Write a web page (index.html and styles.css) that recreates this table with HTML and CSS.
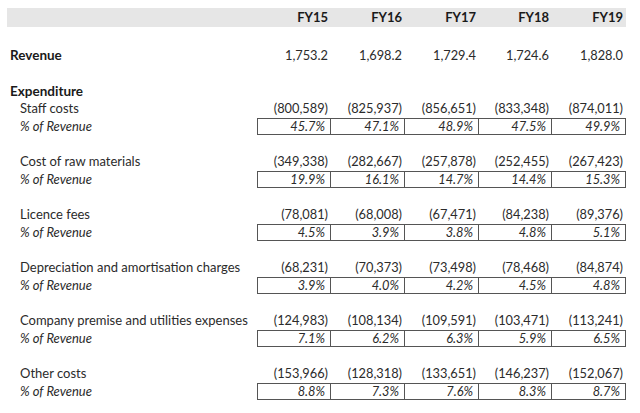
FILE: index.html
```html
<!DOCTYPE html>
<html>
<head>
<meta charset="utf-8">
<link rel="stylesheet" href="styles.css">
</head>
<body>
<div class="sheet">
  <div class="row head">
    <div class="label"></div>
    <div class="num">FY15</div><div class="num">FY16</div><div class="num">FY17</div><div class="num">FY18</div><div class="num">FY19</div>
  </div>
  <div class="row gap first"></div>
  <div class="row">
    <div class="label strong">Revenue</div>
    <div class="num">1,753.2</div><div class="num">1,698.2</div><div class="num">1,729.4</div><div class="num">1,724.6</div><div class="num">1,828.0</div>
  </div>
  <div class="row gap"></div>
  <div class="row">
    <div class="label strong">Expenditure</div>
  </div>

  <div class="row">
    <div class="label sub">Staff costs</div>
    <div class="num">(800,589)</div><div class="num">(825,937)</div><div class="num">(856,651)</div><div class="num">(833,348)</div><div class="num">(874,011)</div>
  </div>
  <div class="row pct">
    <div class="label sub">% of Revenue</div>
    <div class="num">45.7%</div><div class="num">47.1%</div><div class="num">48.9%</div><div class="num">47.5%</div><div class="num">49.9%</div>
  </div>
  <div class="row gap"></div>

  <div class="row">
    <div class="label sub">Cost of raw materials</div>
    <div class="num">(349,338)</div><div class="num">(282,667)</div><div class="num">(257,878)</div><div class="num">(252,455)</div><div class="num">(267,423)</div>
  </div>
  <div class="row pct">
    <div class="label sub">% of Revenue</div>
    <div class="num">19.9%</div><div class="num">16.1%</div><div class="num">14.7%</div><div class="num">14.4%</div><div class="num">15.3%</div>
  </div>
  <div class="row gap"></div>

  <div class="row">
    <div class="label sub">Licence fees</div>
    <div class="num">(78,081)</div><div class="num">(68,008)</div><div class="num">(67,471)</div><div class="num">(84,238)</div><div class="num">(89,376)</div>
  </div>
  <div class="row pct">
    <div class="label sub">% of Revenue</div>
    <div class="num">4.5%</div><div class="num">3.9%</div><div class="num">3.8%</div><div class="num">4.8%</div><div class="num">5.1%</div>
  </div>
  <div class="row gap"></div>

  <div class="row">
    <div class="label sub">Depreciation and amortisation charges</div>
    <div class="num">(68,231)</div><div class="num">(70,373)</div><div class="num">(73,498)</div><div class="num">(78,468)</div><div class="num">(84,874)</div>
  </div>
  <div class="row pct">
    <div class="label sub">% of Revenue</div>
    <div class="num">3.9%</div><div class="num">4.0%</div><div class="num">4.2%</div><div class="num">4.5%</div><div class="num">4.8%</div>
  </div>
  <div class="row gap"></div>

  <div class="row">
    <div class="label sub">Company premise and utilities expenses</div>
    <div class="num">(124,983)</div><div class="num">(108,134)</div><div class="num">(109,591)</div><div class="num">(103,471)</div><div class="num">(113,241)</div>
  </div>
  <div class="row pct">
    <div class="label sub">% of Revenue</div>
    <div class="num">7.1%</div><div class="num">6.2%</div><div class="num">6.3%</div><div class="num">5.9%</div><div class="num">6.5%</div>
  </div>
  <div class="row gap"></div>

  <div class="row">
    <div class="label sub">Other costs</div>
    <div class="num">(153,966)</div><div class="num">(128,318)</div><div class="num">(133,651)</div><div class="num">(146,237)</div><div class="num">(152,067)</div>
  </div>
  <div class="row pct">
    <div class="label sub">% of Revenue</div>
    <div class="num">8.8%</div><div class="num">7.3%</div><div class="num">7.6%</div><div class="num">8.3%</div><div class="num">8.7%</div>
  </div>
</div>
</body>
</html>
```

FILE: styles.css
```css
html, body {
  margin: 0;
  padding: 0;
  background: #ffffff;
}

.sheet {
  padding: 8px 0 0 7px;
  font-family: Lato, "Open Sans", sans-serif;
  font-size: 13px;
  color: #2b2b2b;
}

.row {
  display: grid;
  grid-template-columns: 250px 74px 74px 74px 73px 74px;
  height: 17.67px;
  align-items: center;
  line-height: 17px;
}

.row.head {
  width: 619px;
  height: 19px;
  background: #e6e6e6;
  font-weight: bold;
  color: #1a1a1a;
}

.row.gap {
  height: 17.67px;
}

.row.gap.first {
  height: 20px;
}

.label {
  padding-left: 3px;
  white-space: nowrap;
}

.label.strong {
  font-weight: bold;
  color: #1a1a1a;
  font-size: 13.5px;
}

.label.sub {
  padding-left: 13px;
}

.num {
  text-align: right;
  padding-right: 3px;
  white-space: nowrap;
  font-size: 12.8px;
}

.row.head .num {
  font-size: 13px;
}

.row.pct .label {
  font-style: italic;
}

.row.pct .num {
  font-style: italic;
  height: 17px;
  box-sizing: border-box;
  border: 1px solid #555555;
  border-left: none;
  padding-right: 5px;
  line-height: 15px;
}

.row.pct .num:nth-child(2) {
  border-left: 1px solid #555555;
}
```
